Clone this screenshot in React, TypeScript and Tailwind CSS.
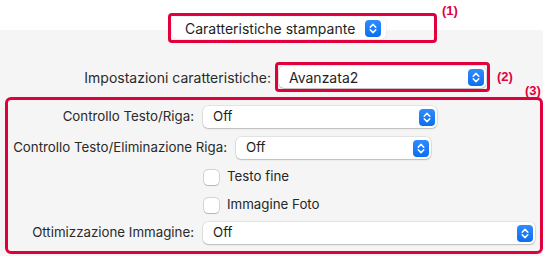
import React from "react";

const Stepper = () => (
  <span className="flex h-[17px] w-[16px] items-center justify-center rounded-[4px] bg-[linear-gradient(to_bottom,#2f8cff,#0a6ff0)]">
    <svg width="16" height="17" viewBox="0 0 16 17" fill="none">
      <path d="M5.2 7.2L8 4.4l2.8 2.8" stroke="white" strokeWidth="1.5" strokeLinecap="round" strokeLinejoin="round" />
      <path d="M5.2 9.8L8 12.6l2.8-2.8" stroke="white" strokeWidth="1.5" strokeLinecap="round" strokeLinejoin="round" />
    </svg>
  </span>
);

const Popup = ({ value, className }: { value: string; className: string }) => (
  <div
    className={`flex h-[22px] items-center justify-between rounded-[5px] bg-white pl-[10px] pr-[2px] text-[#1e1e1e] shadow-[0_0_0_0.5px_rgba(0,0,0,0.14),0_1px_1.5px_rgba(0,0,0,0.18)] ${className}`}
  >
    <span>{value}</span>
    <Stepper />
  </div>
);

const Checkbox = ({ label }: { label: string }) => (
  <div className="flex h-[22px] items-center">
    <span className="ml-[196px] h-[15px] w-[15px] rounded-[4px] bg-white shadow-[0_0_0_0.5px_rgba(0,0,0,0.25),0_0.5px_1px_rgba(0,0,0,0.15)]" />
    <span className="ml-[8px] text-[#262626]">{label}</span>
  </div>
);

const Row = ({ label, labelWidth, popupWidth, value }: { label: string; labelWidth: string; popupWidth: string; value: string }) => (
  <div className="flex h-[22px] items-center">
    <span className={`whitespace-nowrap text-right text-[#2a2a2a] ${labelWidth}`}>{label}</span>
    <Popup value={value} className={popupWidth} />
  </div>
);

const Note = ({ n, className }: { n: number; className: string }) => (
  <span className={`absolute font-['Liberation_Sans',sans-serif] text-[13px] font-bold text-[#e2003c] ${className}`}>({n})</span>
);

export default function App() {
  return (
    <div className="h-[260px] w-[548px] bg-white font-['Inter',sans-serif]">
      <div className="flex h-[256px] w-[543px] flex-col bg-[linear-gradient(to_bottom,#ffffff_30px,#f5f5f5_30px)]">
        {/* (1) */}
        <div className="relative ml-[168px] mt-[13px] flex h-[30px] w-[269px] items-center rounded-[4px] border-[3px] border-[#e2003c] text-[14px]">
          <div className="ml-[1px] flex h-[22px] w-[214px] items-center rounded-[5px] bg-white pl-[13px] pr-[2px] text-[#1e1e1e] shadow-[0_0_0_0.5px_rgba(0,0,0,0.08)]">
            <span className="mr-[10px] whitespace-nowrap">Caratteristiche stampante</span>
            <Stepper />
          </div>
          <Note n={1} className="left-[271px] top-[-15px]" />
        </div>

        {/* (2) */}
        <div className="mt-[19px] flex h-[30px] items-center text-[14px]">
          <span className="w-[271px] whitespace-nowrap text-right text-[#2a2a2a]">Impostazioni caratteristiche:</span>
          <div className="relative ml-[4px] flex h-[30px] w-[215px] items-center rounded-[4px] border-[3px] border-[#e2003c] px-[1px]">
            <Popup value="Avanzata2" className="w-full" />
            <Note n={2} className="left-[219px] top-[2px]" />
          </div>
        </div>

        {/* (3) */}
        <div className="relative ml-[5px] mt-[5px] flex h-[157px] w-[538px] flex-col rounded-[6px] border-[3px] border-[#e2003c] pt-[6px] text-[13.3px]">
          <Note n={3} className="left-[517px] top-[-19px]" />
          <Row label="Controllo Testo/Riga:" labelWidth="w-[195px] pr-[9px]" popupWidth="w-[234px]" value="Off" />
          <div className="mt-[9px]">
            <Row label="Controllo Testo/Eliminazione Riga:" labelWidth="w-[228px] pr-[9px]" popupWidth="w-[195px]" value="Off" />
          </div>
          <div className="mt-[7px]">
            <Checkbox label="Testo fine" />
          </div>
          <div className="mt-[6px]">
            <Checkbox label="Immagine Foto" />
          </div>
          <div className="mt-[6px]">
            <Row label="Ottimizzazione Immagine:" labelWidth="w-[195px] pr-[9px]" popupWidth="w-[332px]" value="Off" />
          </div>
        </div>
      </div>
    </div>
  );
}
